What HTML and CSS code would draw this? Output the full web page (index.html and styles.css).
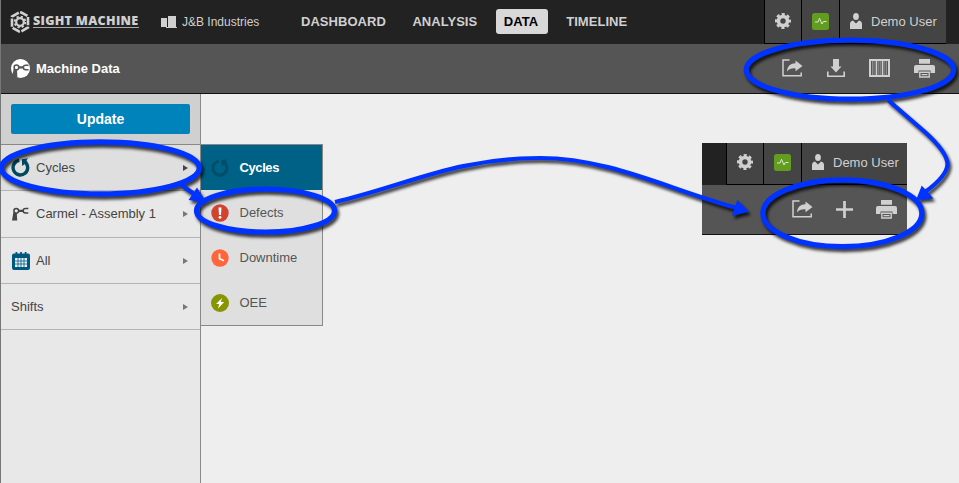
FILE: index.html
```html
<!DOCTYPE html>
<html lang="en">
<head>
<meta charset="utf-8">
<title>Machine Data</title>
<link rel="stylesheet" href="styles.css">
</head>
<body>
<svg class="sprite" aria-hidden="true">
  <symbol id="gear" viewBox="0 0 16 16"><g fill="none" stroke="currentColor"><circle cx="8" cy="8" r="4.500" stroke-width="3.600"/><circle cx="8" cy="8" r="6.800" stroke-width="2.400" stroke-dasharray="3.100 2.240" stroke-dashoffset="1.550"/></g></symbol>
  <symbol id="pulse" viewBox="0 0 17 17"><rect width="17" height="17" rx="2.500" fill="#629c20"/><path d="M3 9h3l1.500-3.700L10 11l1.300-2.500H14.500" fill="none" stroke="#dceacb" stroke-width="1"/></symbol>
  <symbol id="user" viewBox="0 0 12 16"><ellipse cx="6" cy="3.600" rx="2.900" ry="3.500" fill="currentColor"/><path d="M0 16v-5Q0 8 3 7.500L6 10.500l3-3Q12 8 12 11v5z" fill="currentColor"/></symbol>
  <symbol id="share" viewBox="0 0 21 18"><path d="M7.500 1H1v15.800h18.200V13.500" fill="none" stroke="currentColor" stroke-width="1.500"/><path d="M5 12.500C5.500 7 8.500 4.300 13.500 4.300V1.500L20.500 7l-7 5.200V9.400C9.500 9.200 7 10 5 12.500z" fill="currentColor"/></symbol>
  <symbol id="download" viewBox="0 0 18 18"><path d="M6 0h6v7.500h2.500L9 13.500 3.500 7.500H6z" fill="currentColor"/><path d="M.8 12.500v4.700h16.400v-4.700" fill="none" stroke="currentColor" stroke-width="1.600"/></symbol>
  <symbol id="columns" viewBox="0 0 21 18"><path d="M0 0h21v18H0zM2 2V16h4.700V2zM8.200 2V16h4.600V2zM14.300 2V16H19V2z" fill="currentColor" fill-rule="evenodd"/><path d="M3.500 2v14M5 2v14M9.700 2v14M11.300 2v14M15.800 2v14M17.500 2v14" stroke="currentColor" stroke-width=".45"/></symbol>
  <symbol id="print" viewBox="0 0 21 19"><path d="M5 0h11v4.800H5zM2 6h17q2 0 2 2v6h-4.500v-2.500h-12V14H0V8q0-2 2-2z" fill="currentColor"/><path d="M5.800 13.300h9.400v4.700H5.800zM7.500 15.600h6" fill="none" stroke="currentColor" stroke-width="1.400"/></symbol>
  <symbol id="plus" viewBox="0 0 17 17"><path d="M8.500 0v17M0 8.500h17" stroke="currentColor" stroke-width="2.700"/></symbol>
  <symbol id="robot" viewBox="0 0 18 14"><g fill="none" stroke="currentColor"><circle cx="4.500" cy="3.600" r="2.500" stroke-width="1.600"/><path d="M6.800 3.700h5" stroke-width="2.400"/><path d="M17.300 1.300h-3q-2.500 0-2.500 2.300T14.300 6h3" stroke-width="1.600"/></g><path d="M1.500 5l3.600 1.500L5.500 14H0z" fill="currentColor"/></symbol>
  <symbol id="cycle" viewBox="0 0 19 19"><path d="M13.500 3.600A7.300 7.300 0 1 1 8.300 2.400" fill="none" stroke="currentColor" stroke-width="3.400"/><path d="M10.800 1.200L17 .3l-1.500 2 1 1.800-5.300 4z" fill="currentColor"/></symbol>
</svg>

<div class="app">
  <header class="topbar">
    <a class="brand">
      <svg class="brand-mark" viewBox="0 0 22 22"><g fill="none" stroke="currentColor"><path d="M11 1.500h1.500L19 5.200V16.500L12 20.500H10L3 16.500V5.500L10 1.500z" stroke-width="2.600" stroke-dasharray="8.300 1.500"/><circle cx="11" cy="11" r="3.800" stroke-width="2.300"/><circle cx="11" cy="11" r="5.400" stroke-width="1.800" stroke-dasharray="2.300 1.940"/></g></svg>
      <span class="brand-name">SIGHT MACHINE</span>
    </a>
    <div class="company">
      <svg class="building" viewBox="0 0 16 13"><path d="M0 2h6v9H0zM7 0h8v11h1v1H5v-1h2z" fill="currentColor"/></svg>
      <span>J&amp;B Industries</span>
    </div>
    <nav class="nav">
      <a>DASHBOARD</a><a>ANALYSIS</a><a class="active">DATA</a><a>TIMELINE</a>
    </nav>
    <div class="account">
      <span class="cell"><svg class="gear"><use href="#gear"/></svg></span>
      <span class="cell"><svg class="pulse"><use href="#pulse"/></svg></span>
      <span class="cell profile"><svg class="user"><use href="#user"/></svg>Demo User</span>
    </div>
  </header>
  <div class="subbar">
    <svg class="badge" viewBox="0 0 19 19"><circle cx="9.500" cy="9.500" r="9.500" fill="#fff"/><g class="badge-ink"><use href="#robot" x="1.200" y="5" width="17" height="13.200"/></g></svg>
    <h1>Machine Data</h1>
    <div class="tools">
      <svg class="share"><use href="#share"/></svg>
      <svg class="download"><use href="#download"/></svg>
      <svg class="columns"><use href="#columns"/></svg>
      <svg class="print"><use href="#print"/></svg>
    </div>
  </div>

  <main class="body">
    <aside class="sidebar">
      <div class="update"><button>Update</button></div>
      <div class="row selected"><svg class="cycle"><use href="#cycle"/></svg><span>Cycles</span><i></i></div>
      <div class="row"><svg class="robot"><use href="#robot"/></svg><span>Carmel - Assembly 1</span><i></i></div>
      <div class="row short"><svg class="calendar" viewBox="0 0 18 18"><path d="M2 1.500h1.500V0h1.800v1.500h2.800V0h1.800v1.500h2.800V0h1.800v1.500H16q2 0 2 2V16q0 2-2 2H2q-2 0-2-2V3.500q0-2 2-2z" fill="#00587f"/><path d="M3 6h12v9H3z" fill="#e8f3f7"/><path d="M6 6v9M9 6v9M12 6v9M3 9h12M3 12h12" stroke="#00587f" stroke-width=".8"/></svg><span>All</span><i></i></div>
      <div class="row short"><span>Shifts</span><i></i></div>
    </aside>
    <div class="submenu">
      <div class="option current"><svg class="dim"><use href="#cycle"/></svg><span>Cycles</span></div>
      <div class="option"><svg viewBox="0 0 18 18"><circle cx="9" cy="9" r="8.700" fill="#cf432f"/><path d="M7.500 3.500h3L10 11H8z" fill="#fff"/><circle cx="9" cy="13.300" r="1.400" fill="#fff"/></svg><span>Defects</span></div>
      <div class="option"><svg viewBox="0 0 18 18"><circle cx="9" cy="9" r="8.700" fill="#ff653b"/><path d="M8.500 4.500v5.300l4.500 2" fill="none" stroke="#fff" stroke-width="1.700"/></svg><span>Downtime</span></div>
      <div class="option"><svg viewBox="0 0 18 18"><circle cx="9" cy="9" r="9" fill="#879600"/><path d="M11 4L5 10h3.200l-1.200 4.500L13.200 8H9.800z" fill="#fff"/></svg><span>OEE</span></div>
    </div>
    <section class="inset">
      <div class="inset-top">
        <span class="cell"><svg class="gear"><use href="#gear"/></svg></span>
        <span class="cell"><svg class="pulse"><use href="#pulse"/></svg></span>
        <span class="cell profile"><svg class="user"><use href="#user"/></svg>Demo User</span>
      </div>
      <div class="inset-tools">
        <svg class="share"><use href="#share"/></svg>
        <svg class="plus"><use href="#plus"/></svg>
        <svg class="print"><use href="#print"/></svg>
      </div>
    </section>
  </main>
</div>

<svg class="annotations" viewBox="0 0 959 483">
  <g class="ink">
    <ellipse cx="850" cy="69.700" rx="103.700" ry="29.500"/>
    <ellipse cx="100.300" cy="168" rx="99" ry="26"/>
    <ellipse cx="265.500" cy="210.700" rx="69" ry="21.500"/>
    <ellipse cx="842.400" cy="213.300" rx="79.500" ry="33.300"/>
    <path class="line" d="M335 202C405 186 455 158 540 158C610 158 670 190 737 208"/>
    <path class="line" d="M888 100L925 132Q947 152 947.500 164Q947 176 925 192"/>
    <path class="line" d="M181.500 185L197 196"/>
    <path class="head" d="M737.300 199.700L749 211.800L732 216z"/>
    <path class="head" d="M921.700 185.500L916 200.300L933.500 198.500z"/>
    <path class="head" d="M197 187.500L207 203L188.500 200z"/>
  </g>
</svg>
</body>
</html>
```
FILE: styles.css
```css
* { box-sizing: border-box; }
body {
  margin: 0;
  background: #eee;
  color: #444;
  font: 13px "Liberation Sans", Arial, sans-serif;
  overflow: hidden;
}
svg { display: block; flex: none; }
.sprite { position: absolute; width: 0; height: 0; }
.app { height: 483px; display: flex; flex-direction: column; border-left: 1px solid #777; }

.topbar { height: 44px; flex: none; display: flex; background: #222; color: #d0d0d0; }
.brand { display: flex; align-items: center; width: 160px; padding-left: 8px; }
.brand-mark { width: 22px; height: 22px; margin-right: 2px; }
.brand-name {
  width: 106px;
  height: 13px;
  margin-bottom: 2px;
  border-bottom: 1px solid #aaa;
  font: 800 12.500px/11px "Open Sans", sans-serif;
  letter-spacing: .3px;
  white-space: nowrap;
}
.company { display: flex; align-items: center; width: 127px; font-size: 12px; }
.building { width: 16px; height: 13px; margin-right: 5px; }
.nav { display: flex; align-items: center; gap: 10.500px; padding-left: 5px; padding-bottom: 1px; font-weight: bold; }
.nav a { height: 25px; padding: 0 8px; border-radius: 3px; line-height: 25px; letter-spacing: .04px; }
.nav .active { width: 52px; background: #d8d8d8; color: #000; }
.account { display: flex; margin: 0 13px 0 auto; }
.cell {
  display: flex;
  align-items: center;
  justify-content: center;
  width: 37px;
  height: 44px;
  padding-bottom: 1px;
  border-left: 1px solid #000;
  border-bottom: 1px solid #000;
  background: #444;
  color: #d0d0d0;
}
.cell + .cell { width: 38px; }
.cell.profile { width: 107px; justify-content: flex-start; padding-left: 10px; }
.gear { width: 16px; height: 16px; }
.pulse { width: 17px; height: 17px; }
.user { width: 12px; height: 16px; margin-right: 9px; }

.subbar {
  height: 50px;
  flex: none;
  display: flex;
  align-items: center;
  padding: 0 24px 1px 10px;
  border-bottom: 1px solid #111;
  background: #555;
}
.badge { width: 19px; height: 19px; margin-right: 6px; }
.badge-ink { color: #555; }
h1 { margin: 0; color: #fff; font-size: 13px; }
.tools { display: flex; align-items: center; gap: 24px; margin-left: auto; color: #d0d0d0; }
.share { width: 21px; height: 18px; }
.download { width: 18px; height: 18px; }
.columns { width: 21px; height: 18px; }
.print { width: 21px; height: 19px; }
.plus { width: 17px; height: 17px; }

.body { flex: 1; display: flex; align-items: flex-start; }
.sidebar { width: 200px; height: 389px; border-right: 1px solid #888; background: #e8e8e8; }
.update { height: 51px; padding: 10px; border-bottom: 1px solid #888; background: #d0d0d0; }
.update button {
  display: block;
  width: 179px;
  height: 30px;
  border: 0;
  border-radius: 2px;
  background: #0082bb;
  color: #fff;
  font: bold 14px "Liberation Sans", Arial, sans-serif;
}
.row { display: flex; align-items: center; height: 46px; padding: 0 12px 0 10px; border-bottom: 1px solid #b4b4b4; }
.row + .row { height: 47px; padding-bottom: 1px; }
.row + .row.short { height: 46px; padding-bottom: 0; }
.row.selected { background: #dfdfdf; }
.row svg { margin-right: 6px; }
.row i { margin-left: auto; border-left: 5px solid #777; border-top: 3.500px solid transparent; border-bottom: 3.500px solid transparent; }
.row.selected i { border-left-color: #444; }
.cycle { width: 19px; height: 19px; color: #00495f; }
.row .robot { width: 17px; height: 14px; margin: 0 7px 0 1px; }
.row .calendar { width: 18px; height: 18px; margin: 0 6px 0 1px; }

.submenu { width: 122px; margin-top: 50px; border: 1px solid #888; border-left: 0; background: #dfdfdf; }
.option { display: flex; align-items: center; height: 45px; padding-left: 10px; color: #555; }
.option svg { width: 18px; height: 18px; margin-right: 10.500px; }
.option.current { background: #006187; color: #fff; font-weight: bold; letter-spacing: -.4px; }
.option .dim { color: #004f69; }

.inset { width: 205px; margin: 49px 52px 0 auto; }
.inset-top { display: flex; justify-content: flex-end; height: 42px; background: #222; }
.inset-top .cell { height: 42px; padding-bottom: 3px; }
.inset-top .profile { width: 106px; }
.inset-tools {
  display: flex;
  align-items: center;
  justify-content: flex-end;
  gap: 23px;
  height: 50px;
  padding: 0 10px 1px 0;
  border-bottom: 1px solid #111;
  background: #555;
  color: #d0d0d0;
}

.annotations { position: absolute; left: 0; top: 0; width: 959px; height: 483px; pointer-events: none; }
.ink { fill: none; stroke: #03f; stroke-width: 5.300; filter: drop-shadow(2px 3px 1.500px rgba(0, 0, 0, .75)); }
.line { stroke-width: 4.200; }
.head { fill: #03f; stroke: none; }
```
